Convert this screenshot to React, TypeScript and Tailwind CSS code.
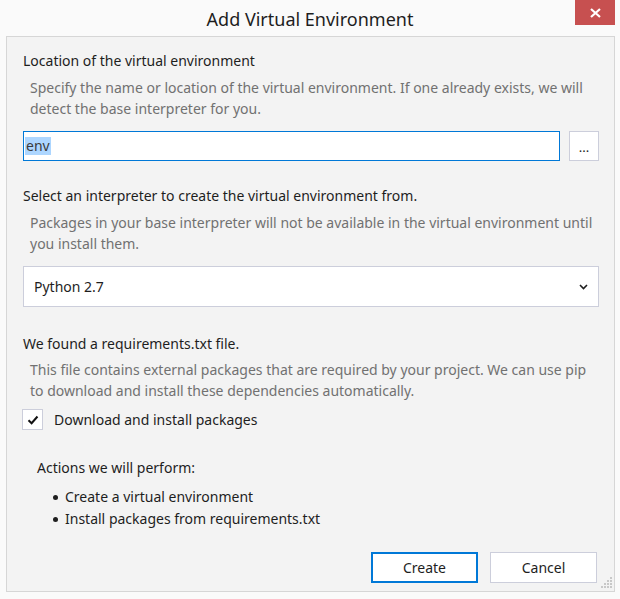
import React from "react";

const font = { fontFamily: '"Segoe UI", "Noto Sans", "Open Sans", sans-serif' };

const App = () => {
  return (
    <div
      className="relative w-[620px] h-[599px] bg-[#fafafa] text-[#1e1e1e] overflow-hidden"
      style={font}
    >
      {/* title bar */}
      <div className="h-[36px] flex items-center justify-center">
        <h1 className="text-[18px] leading-none text-[#1e1e1e] mt-[1px]">Add Virtual Environment</h1>
      </div>
      <button className="absolute top-0 right-[5px] w-[40px] h-[25px] bg-[#c75050] flex items-center justify-center">
        <svg width="11" height="10" viewBox="0 0 11 10">
          <path d="M1 1 L10 9 M10 1 L1 9" stroke="#fff" strokeWidth="2.2" />
        </svg>
      </button>

      {/* panel */}
      <div className="ml-[6px] mr-[5px] h-[556px] border border-[#d6d6d6] bg-[#f3f3f3] pl-4 pr-[15px] pt-[14px] text-[14px]">
        <p className="leading-[20px]">Location of the virtual environment</p>
        <p className="mt-[6px] pl-[7px] leading-[21px] text-[#717171]">
          Specify the name or location of the virtual environment. If one already exists, we will detect the base
          interpreter for you.
        </p>
        <div className="mt-[12px] flex gap-[9px]">
          <div className="flex-1 h-[30px] border border-[#0078d7] bg-white flex items-center px-[1px]">
            <span className="bg-[#add6ff] text-[#3b3b3b] leading-[18px] px-[1px]">env</span>
          </div>
          <button className="w-[30px] h-[30px] border border-[#cccedb] bg-white text-[13px] leading-none pt-[2px]">
            ...
          </button>
        </div>

        <p className="mt-[25px] leading-[20px]">Select an interpreter to create the virtual environment from.</p>
        <p className="mt-[6px] pl-[7px] leading-[21px] text-[#717171]">
          Packages in your base interpreter will not be available in the virtual environment until you install them.
        </p>
        <div className="mt-[12px] h-[41px] border border-[#cccedb] bg-white flex items-center justify-between pl-[10px] pr-[10px]">
          <span>Python 2.7</span>
          <svg width="9" height="6" viewBox="0 0 9 6">
            <path d="M1 1 L4.5 4.5 L8 1" stroke="#1e1e1e" strokeWidth="1.6" fill="none" />
          </svg>
        </div>

        <p className="mt-[27px] leading-[20px]">We found a requirements.txt file.</p>
        <p className="mt-[5px] pl-[7px] leading-[21px] text-[#717171]">
          This file contains external packages that are required by your project. We can use pip to download and
          install these dependencies automatically.
        </p>
        <div className="mt-[8px] flex items-center gap-[11px] -ml-[1px]">
          <div className="w-[21px] h-[21px] border border-[#cccedb] bg-white flex items-center justify-center">
            <svg width="12" height="10" viewBox="0 0 12 10">
              <path d="M1.5 5.2 L4.6 8.2 L10.5 1.5" stroke="#111" strokeWidth="2" fill="none" />
            </svg>
          </div>
          <span className="leading-[20px]">Download and install packages</span>
        </div>

        <div className="mt-[28px] pl-[14px]">
          <p className="leading-[20px]">Actions we will perform:</p>
          <ul className="mt-[8px] pl-[16px]">
            {["Create a virtual environment", "Install packages from requirements.txt"].map((t) => (
              <li key={t} className="flex items-center gap-[7px] leading-[22px]">
                <span className="w-[5px] h-[5px] rounded-full bg-[#1e1e1e]" />
                {t}
              </li>
            ))}
          </ul>
        </div>

        <div className="mt-[22px] flex justify-end gap-[12px] pr-[2px]">
          <button className="w-[107px] h-[31px] border-2 border-[#0078d7] bg-white leading-none">Create</button>
          <button className="w-[107px] h-[31px] border border-[#cccedb] bg-white leading-none">Cancel</button>
        </div>
      </div>

      {/* resize grip */}
      <svg className="absolute right-[8px] bottom-[11px]" width="12" height="12" viewBox="0 0 12 12">
        {[
          [10, 1], [10, 4], [7, 4], [10, 7], [7, 7], [4, 7], [10, 10], [7, 10], [4, 10], [1, 10],
        ].map(([x, y], i) => (
          <rect key={i} x={x} y={y} width="2" height="2" fill="#c8c8c8" />
        ))}
      </svg>
    </div>
  );
};

export default App;
